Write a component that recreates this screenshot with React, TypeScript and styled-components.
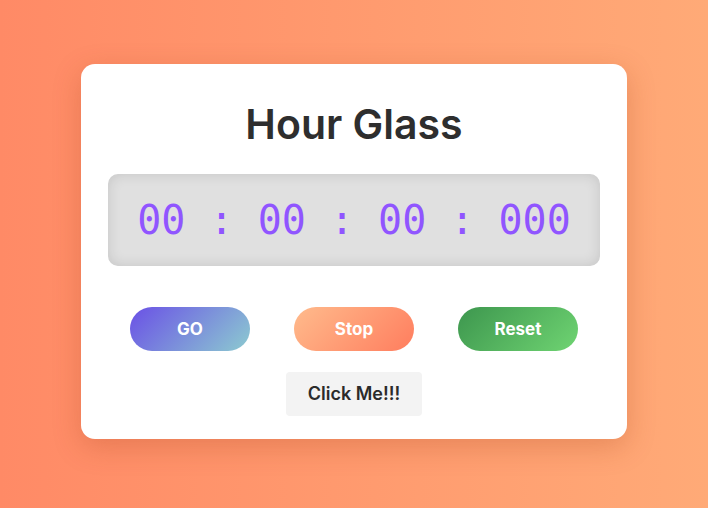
import React from "react";
import styled, { createGlobalStyle } from "styled-components";

const GlobalStyle = createGlobalStyle`
  html, body {
    margin: 0;
    padding: 0;
    height: 100%;
  }
  body {
    font-family: Inter, "Open Sans", sans-serif;
  }
  #root {
    height: 100%;
  }
`;

const Page = styled.div`
  height: 100%;
  min-height: 508px;
  box-sizing: border-box;
  padding-bottom: 6px;
  display: flex;
  align-items: center;
  justify-content: center;
  background: linear-gradient(to right, #ff8a66, #ffaa77);
`;

const Card = styled.div`
  width: 546px;
  box-sizing: border-box;
  padding: 30px 27px 23px;
  background: #fff;
  border-radius: 14px;
  box-shadow: 0 8px 28px rgba(160, 60, 20, 0.25);
  display: flex;
  flex-direction: column;
  align-items: center;
`;

const Title = styled.h1`
  margin: 0 0 20px;
  font-size: 41px;
  line-height: 60px;
  font-weight: 600;
  color: #2e2e2e;
`;

const Display = styled.div`
  width: 100%;
  height: 92px;
  display: flex;
  align-items: center;
  justify-content: center;
  background: #e0e0e0;
  border-radius: 10px;
  box-shadow: inset 0 0 14px rgba(0, 0, 0, 0.12);
  font-family: "DejaVu Sans Mono", "Liberation Mono", monospace;
  font-size: 40px;
  color: #9055ff;
  white-space: pre;
`;

const ButtonRow = styled.div`
  margin-top: 41px;
  display: flex;
  gap: 44px;
`;

const PillButton = styled.button<{ $from: string; $to: string }>`
  width: 120px;
  height: 44px;
  border: none;
  border-radius: 22px;
  background: linear-gradient(135deg, ${(p) => p.$from}, ${(p) => p.$to});
  color: #fff;
  font-family: inherit;
  font-size: 17px;
  font-weight: 700;
  cursor: pointer;
`;

const PlainButton = styled.button`
  margin-top: 21px;
  width: 136px;
  height: 44px;
  border: none;
  border-radius: 4px;
  background: #f3f3f3;
  color: #2b2b2b;
  font-family: inherit;
  font-size: 18px;
  font-weight: 600;
  cursor: pointer;
`;

export default function App() {
  return (
    <>
      <GlobalStyle />
      <Page>
        <Card>
          <Title>Hour Glass</Title>
          <Display>00 : 00 : 00 : 000</Display>
          <ButtonRow>
            <PillButton $from="#6a50e6" $to="#8ccbd0">GO</PillButton>
            <PillButton $from="#ffbb8c" $to="#ff7d5e">Stop</PillButton>
            <PillButton $from="#3d964e" $to="#6fd472">Reset</PillButton>
          </ButtonRow>
          <PlainButton>Click Me!!!</PlainButton>
        </Card>
      </Page>
    </>
  );
}
